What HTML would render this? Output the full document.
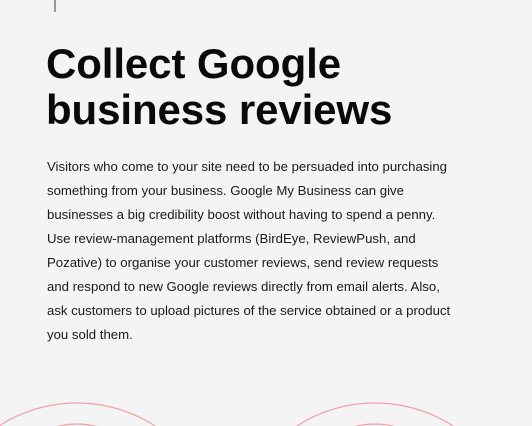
<!DOCTYPE html>
<html><head><style>
html,body{margin:0;width:532px;height:426px;overflow:hidden;background:#f4f4f4;font-family:"Liberation Sans",sans-serif;position:relative}
.vl{position:absolute;left:54px;top:0;width:2px;height:12px;background:#999}
h1{position:absolute;left:46px;top:41px;margin:0;font-size:42px;line-height:46px;font-weight:bold;color:#0a0a0a;letter-spacing:-0.1px}
p{position:absolute;left:47px;top:155px;margin:0;white-space:nowrap;font-size:13.2px;line-height:24px;color:#1a1a1a}
svg{position:absolute;left:0;top:0}
</style></head><body>
<div class="vl"></div>
<h1>Collect Google<br>business reviews</h1>
<p>Visitors who come to your site need to be persuaded into purchasing<br>something from your business. Google My Business can give<br>businesses a big credibility boost without having to spend a penny.<br>Use review-management platforms (BirdEye, ReviewPush, and<br>Pozative) to organise your customer reviews, send review requests<br>and respond to new Google reviews directly from email alerts. Also,<br>ask customers to upload pictures of the service obtained or a product<br>you sold them.</p>
<svg width="532" height="426"><g fill="none" stroke="#f2a0a4" stroke-width="1.2">
<circle cx="77" cy="547" r="144"/><circle cx="77" cy="504" r="80"/>
<circle cx="375" cy="547" r="144"/><circle cx="375" cy="504" r="80"/></g></svg>
</body></html>
